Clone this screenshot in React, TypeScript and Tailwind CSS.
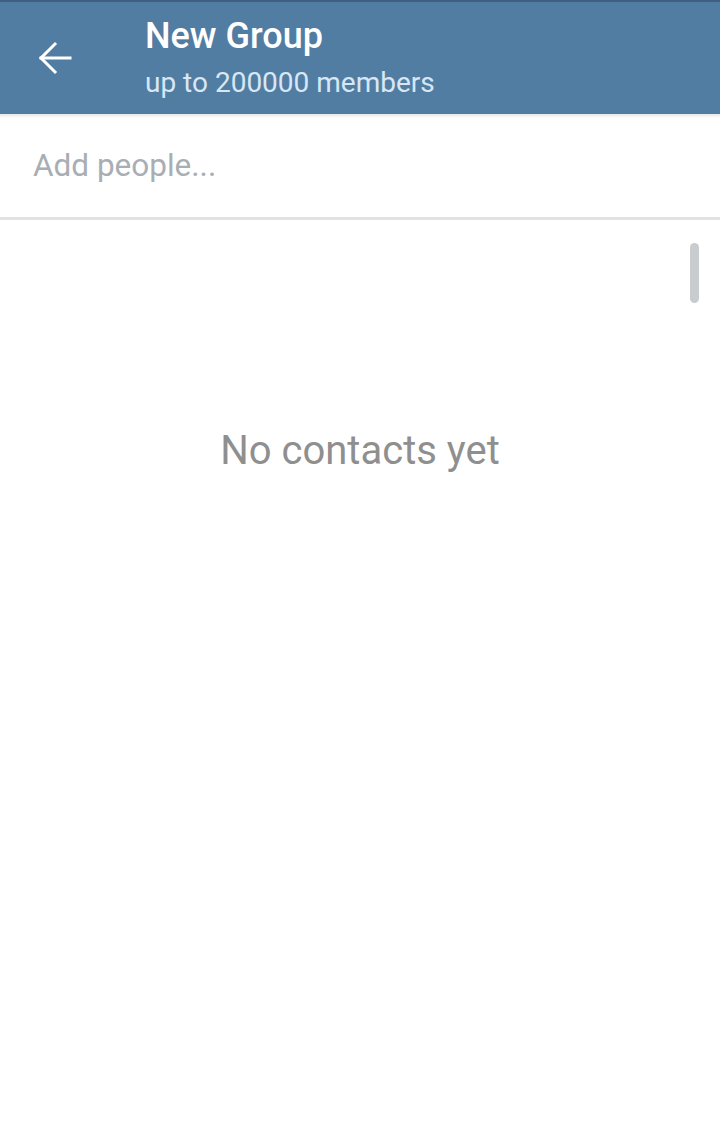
export default function App() {
  return (
    <div className="flex h-[1130px] w-[720px] flex-col bg-white" style={{ fontFamily: "Roboto, 'Noto Sans', sans-serif" }}>
      <header className="relative h-[114px] shrink-0 border-t-2 border-[#3f5f80] bg-[#527da3]">
        <div className="flex h-full items-start">
          <div className="flex h-full w-[145px] items-center pl-[38px]">
            <svg width="34" height="34" viewBox="0 0 34 34" fill="none" stroke="white" strokeWidth="3" strokeLinecap="square">
              <path d="M3 17h29" />
              <path d="M17 3 3 17l14 14" />
            </svg>
          </div>
          <div className="flex flex-col pt-[14px]">
            <div className="text-[36px] font-medium leading-[40px] text-white">New Group</div>
            <div className="mt-[10px] text-[28px] leading-[34px] text-[#d7e7f5]">up to 200000 members</div>
          </div>
        </div>
        <div className="absolute left-0 right-0 top-full h-[4px] bg-gradient-to-b from-[#00000018] to-transparent" />
      </header>
      <div className="flex h-[106px] shrink-0 items-center border-b-[3px] border-[#e2e2e2] px-[33px]">
        <span className="text-[31.5px] text-[#a9aeb4]">Add people...</span>
      </div>
      <div className="relative flex-1">
        <div className="absolute right-[21px] top-[23px] h-[60px] w-[9px] rounded-full bg-[#c9cccf]" />
        <div className="pt-[207px] text-center text-[40px] leading-[48px] text-[#8f8f8f]">No contacts yet</div>
      </div>
    </div>
  );
}
